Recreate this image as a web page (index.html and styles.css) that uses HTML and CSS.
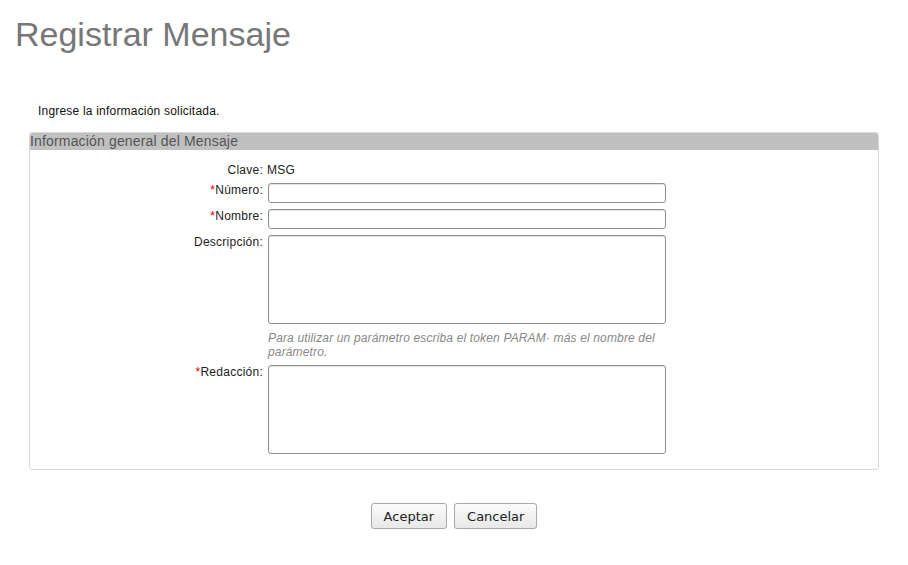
FILE: index.html
```html
<!DOCTYPE html>
<html lang="es">
<head>
<meta charset="utf-8">
<title>Registrar Mensaje</title>
<link rel="stylesheet" href="styles.css">
</head>
<body>
<div class="page">
  <h1 class="title">Registrar Mensaje</h1>
  <p class="intro">Ingrese la información solicitada.</p>
  <div class="panel">
    <div class="panel-head">Información general del Mensaje</div>
    <div class="panel-body">
      <div class="form">
        <div class="label">Clave:</div>
        <div class="value">MSG</div>

        <label class="label" for="numero"><span class="req">*</span>Número:</label>
        <div class="field"><input id="numero" class="input" type="text"></div>

        <label class="label" for="nombre"><span class="req">*</span>Nombre:</label>
        <div class="field"><input id="nombre" class="input" type="text"></div>

        <label class="label" for="desc">Descripción:</label>
        <div class="field">
          <textarea id="desc" class="area"></textarea>
          <div class="help">Para utilizar un parámetro escriba el token PARAM· más el nombre del parámetro.</div>
        </div>

        <label class="label" for="red"><span class="req">*</span>Redacción:</label>
        <div class="field"><textarea id="red" class="area"></textarea></div>
      </div>
    </div>
  </div>
  <div class="actions">
    <button class="btn" type="button">Aceptar</button>
    <button class="btn" type="button">Cancelar</button>
  </div>
</div>
</body>
</html>
```

FILE: styles.css
```css
html, body {
  margin: 0;
  padding: 0;
  background: #ffffff;
}

body {
  font-family: "Liberation Sans", Arial, sans-serif;
  color: #222222;
}

.page {
  padding: 14px 29px 0 29px;
}

.title {
  margin: 0 0 0 -14px;
  font-size: 34px;
  font-weight: normal;
  line-height: 40px;
  color: #777777;
}

.intro {
  margin: 50px 0 0 9px;
  font-size: 12px;
  line-height: 14px;
  letter-spacing: 0.2px;
  color: #111111;
}

.panel {
  margin-top: 14px;
  border: 1px solid #d9d9d9;
  border-radius: 3px;
  width: 850px;
  box-sizing: border-box;
  overflow: hidden;
}

.panel-head {
  background: #c0c0c0;
  color: #555555;
  font-size: 14px;
  letter-spacing: 0.16px;
  line-height: 17px;
  height: 17px;
}

.panel-body {
  padding: 13px 0 15px 0;
}

.form {
  display: grid;
  grid-template-columns: 233px 398px;
  column-gap: 5px;
  row-gap: 6px;
  align-items: start;
}

.label {
  text-align: right;
  font-size: 12px;
  line-height: 14px;
  letter-spacing: 0.25px;
  color: #222222;
}

.value {
  font-size: 12px;
  line-height: 14px;
  letter-spacing: 0.25px;
  color: #222222;
  margin-left: -1px;
}

.req {
  color: #cc0000;
}

.field {
  display: flex;
  flex-direction: column;
}

.input, .area {
  display: block;
  box-sizing: border-box;
  width: 398px;
  margin: 0;
  border: 1px solid #8f8f8f;
  border-radius: 3px;
  background: #ffffff;
  box-shadow: inset 0 1px 1px rgba(0, 0, 0, 0.12);
  font-family: "Liberation Sans", Arial, sans-serif;
  font-size: 12px;
}

.input {
  height: 20px;
}

.area {
  height: 89px;
  resize: none;
}

.help {
  margin-top: 7px;
  font-size: 12px;
  line-height: 14px;
  letter-spacing: 0.15px;
  font-style: italic;
  color: #888888;
}

.actions {
  margin-top: 33px;
  display: flex;
  justify-content: center;
  gap: 7px;
}

.btn {
  font-family: "DejaVu Sans", sans-serif;
  font-size: 13px;
  color: #222222;
  height: 26px;
  padding: 0 12px;
  border: 1px solid #a8a8a8;
  border-radius: 3px;
  background: linear-gradient(#fbfbfb, #e8e8e8);
  box-shadow: 0 1px 0 rgba(0, 0, 0, 0.08);
}
```
